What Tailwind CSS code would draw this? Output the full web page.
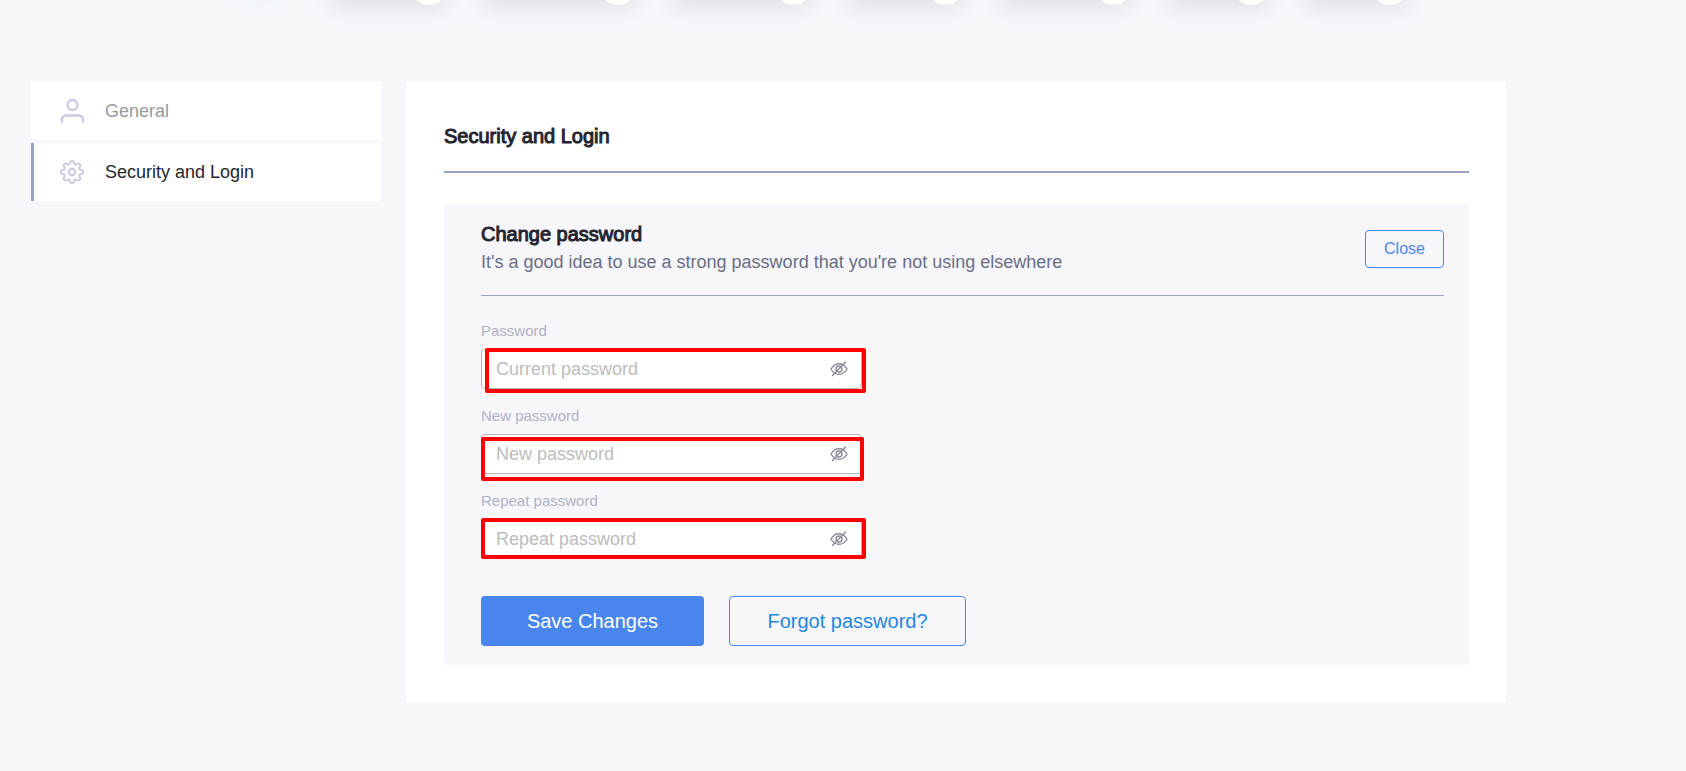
<!DOCTYPE html>
<html lang="en">
<head>
    <meta charset="UTF-8">
    <meta name="viewport" content="width=device-width, initial-scale=1.0">
    <title>Security and Login</title>
    <script src="https://cdn.jsdelivr.net/npm/@tailwindcss/browser@4"></script>
</head>
<body class="bg-[#f6f6fb] font-['Liberation_Sans',Arial,sans-serif] text-[#25252f]">
    <!-- Top tags, scrolled almost out of view -->
    <div class="flex gap-9 h-[82px] pl-[241px] overflow-hidden">
        <div class="w-[42px] h-11 -mt-14 mr-3 rounded-full bg-white shadow-[0_10px_20px_#e9f0f3]"></div>
        <div class="relative w-[116px] h-11 -mt-12 rounded-lg bg-white shadow-[0_12px_20px_#e2e1e7]"><span class="absolute right-0 -bottom-[9px] size-9 rounded-full bg-white"></span></div>
        <div class="relative w-[153px] h-11 -mt-12 rounded-lg bg-white shadow-[0_12px_20px_#e2e1e7]"><span class="absolute right-0 -bottom-[9px] size-9 rounded-full bg-white"></span></div>
        <div class="relative w-[139px] h-11 -mt-12 rounded-lg bg-white shadow-[0_12px_20px_#e2e1e7]"><span class="absolute right-0 -bottom-[9px] size-9 rounded-full bg-white"></span></div>
        <div class="relative w-[116px] h-11 -mt-12 rounded-lg bg-white shadow-[0_12px_20px_#e2e1e7]"><span class="absolute right-0 -bottom-[9px] size-9 rounded-full bg-white"></span></div>
        <div class="relative w-[132px] h-11 -mt-12 rounded-lg bg-white shadow-[0_12px_20px_#e2e1e7]"><span class="absolute right-0 -bottom-[9px] size-9 rounded-full bg-white"></span></div>
        <div class="relative w-[102px] h-11 -mt-12 rounded-lg bg-white shadow-[0_12px_20px_#e2e1e7]"><span class="absolute right-0 -bottom-[9px] size-9 rounded-full bg-white"></span></div>
        <div class="relative w-[103px] h-11 -mt-12 rounded-lg bg-white shadow-[0_12px_20px_#e2e1e7]"><span class="absolute right-0 -bottom-[9px] size-9 rounded-full bg-white"></span></div>
    </div>

    <div class="flex items-start gap-[25px] pl-[31px] pr-[180px] pb-16">
        <!-- Sidebar -->
        <nav class="w-[350px] shrink-0 flex flex-col gap-[3px] text-lg">
            <a href="#general" class="flex items-center gap-[21px] h-[58px] pl-[29px] bg-white text-[#999999]">
                <svg class="size-6" viewBox="0 0 24 24" fill="none" stroke="#c9c9e0" stroke-width="2.3" stroke-linecap="round">
                    <circle cx="12.5" cy="6" r="5"/>
                    <path d="M2 23v-2.500a4 4 0 0 1 4-4h13a4 4 0 0 1 4 4V23"/>
                </svg>
                General
            </a>
            <a href="#security" class="flex items-center gap-[21px] h-[58px] pl-[26px] border-l-3 border-[#9ba3c5] bg-white">
                <svg class="size-6" viewBox="0 0 24 24" fill="none" stroke="#c9c9e0" stroke-width="1.9" stroke-linejoin="round">
                    <circle cx="12" cy="12" r="3.2"/>
                    <path d="M9.8 3.2C10 1.6 10.8.9 12 .9s2 .7 2.2 2.3c.2 1.4 1.300 1.900 2.500 1 1.300-1 2.300-.9 3.100-.1s.9 1.800-.1 3.100c-.9 1.200-.4 2.400 1 2.600 1.700.2 2.400 1 2.400 2.200s-.7 2-2.400 2.200c-1.400.2-1.900 1.400-1 2.600 1 1.300.9 2.300.1 3.100s-1.800.9-3.100-.1c-1.200-.9-2.300-.4-2.500 1-.2 1.600-1 2.300-2.200 2.300s-2-.7-2.200-2.300c-.2-1.400-1.300-1.900-2.500-1-1.300 1-2.300.9-3.100.1s-.9-1.800.1-3.100c.9-1.200.4-2.400-1-2.600C1.600 14 .9 13.200.9 12s.7-2 2.400-2.200c1.400-.2 1.900-1.400 1-2.600-1-1.300-.9-2.300-.1-3.100s1.800-.9 3.100.1c1.200.9 2.300.4 2.500-1z"/>
                </svg>
                Security and Login
            </a>
        </nav>

        <!-- Content -->
        <main class="flex-1 bg-white pl-[38px] pr-[37px] pt-10 pb-[37px]">
            <h1 class="pb-[21px] border-b-2 border-[#9ba3c5] text-xl leading-7 [-webkit-text-stroke:1px]">Security and Login</h1>

            <section class="mt-[30px] rounded-sm bg-[#f6f6fb] pl-[37px] pr-[25px] pt-[17px] pb-[19px]">
                <div class="flex items-end justify-between border-b border-[#9ba3c5]">
                    <div class="pb-[19px]">
                        <h2 class="text-xl leading-7 [-webkit-text-stroke:1px]">Change password</h2>
                        <p class="text-lg leading-7 text-[#6b6d85]">It's a good idea to use a strong password that you're not using elsewhere</p>
                    </div>
                    <button type="button" class="w-[79px] h-[38px] mb-[27px] border border-[#4886ed] rounded text-base text-[#4886ed]">Close</button>
                </div>

                <form class="pt-[25px]">
                    <div class="flex flex-col gap-[17px] w-[381px]">
                        <div>
                            <label for="current" class="block h-7 leading-5 text-[15px] text-[#b2b2c4]">Password</label>
                            <div class="relative">
                                <input id="current" type="password" placeholder="Current password" class="block w-full h-10 pl-[14px] pr-12 border border-[#b4b4bd] rounded bg-white text-lg placeholder:text-[#bcbcbc]">
                                <button type="button" aria-label="Show current password" class="absolute right-[14px] top-3">
                                    <svg class="w-[18px] h-4" viewBox="0 0 18 16" fill="none" stroke="#8c8c99" stroke-width="1.4" stroke-linecap="round"><path d="M1 8c2-3.500 4.800-5.300 8-5.300S15 4.500 17 8c-2 3.500-4.800 5.300-8 5.300S3 11.500 1 8z"/><circle cx="9" cy="8" r="3"/><path d="M2.500 14.500 15.500 1"/></svg>
                                </button>
                                <span class="absolute left-1 -right-1 -top-px -bottom-1 border-4 border-[#ff0000] rounded-xs pointer-events-none"></span>
                            </div>
                        </div>
                        <div>
                            <label for="new" class="block h-7 leading-5 text-[15px] text-[#b2b2c4]">New password</label>
                            <div class="relative">
                                <input id="new" type="password" placeholder="New password" class="block w-full h-10 pl-[14px] pr-12 border border-[#b4b4bd] rounded bg-white text-lg placeholder:text-[#bcbcbc]">
                                <button type="button" aria-label="Show new password" class="absolute right-[14px] top-3">
                                    <svg class="w-[18px] h-4" viewBox="0 0 18 16" fill="none" stroke="#8c8c99" stroke-width="1.4" stroke-linecap="round"><path d="M1 8c2-3.500 4.800-5.300 8-5.300S15 4.500 17 8c-2 3.500-4.800 5.300-8 5.300S3 11.500 1 8z"/><circle cx="9" cy="8" r="3"/><path d="M2.500 14.500 15.500 1"/></svg>
                                </button>
                                <span class="absolute left-0 -right-0.5 top-[3px] -bottom-[7px] border-4 border-[#ff0000] rounded-xs pointer-events-none"></span>
                            </div>
                        </div>
                        <div>
                            <label for="repeat" class="block h-7 leading-5 text-[15px] text-[#b2b2c4]">Repeat password</label>
                            <div class="relative">
                                <input id="repeat" type="password" placeholder="Repeat password" class="block w-full h-10 pl-[14px] pr-12 border border-[#b4b4bd] rounded bg-white text-lg placeholder:text-[#bcbcbc]">
                                <button type="button" aria-label="Show repeated password" class="absolute right-[14px] top-3">
                                    <svg class="w-[18px] h-4" viewBox="0 0 18 16" fill="none" stroke="#8c8c99" stroke-width="1.4" stroke-linecap="round"><path d="M1 8c2-3.500 4.800-5.300 8-5.300S15 4.500 17 8c-2 3.500-4.800 5.300-8 5.300S3 11.500 1 8z"/><circle cx="9" cy="8" r="3"/><path d="M2.500 14.500 15.500 1"/></svg>
                                </button>
                                <span class="absolute left-0 -right-1 -top-px bottom-0 border-4 border-[#ff0000] rounded-xs pointer-events-none"></span>
                            </div>
                        </div>
                    </div>
                    <div class="flex gap-[25px] mt-[37px] text-xl">
                        <button type="submit" class="w-[223px] h-[50px] rounded bg-[#4886ed] text-white">Save Changes</button>
                        <button type="button" class="w-[237px] h-[50px] border border-[#4886ed] rounded text-[#2487de]">Forgot password?</button>
                    </div>
                </form>
            </section>
        </main>
    </div>
</body>
</html>
